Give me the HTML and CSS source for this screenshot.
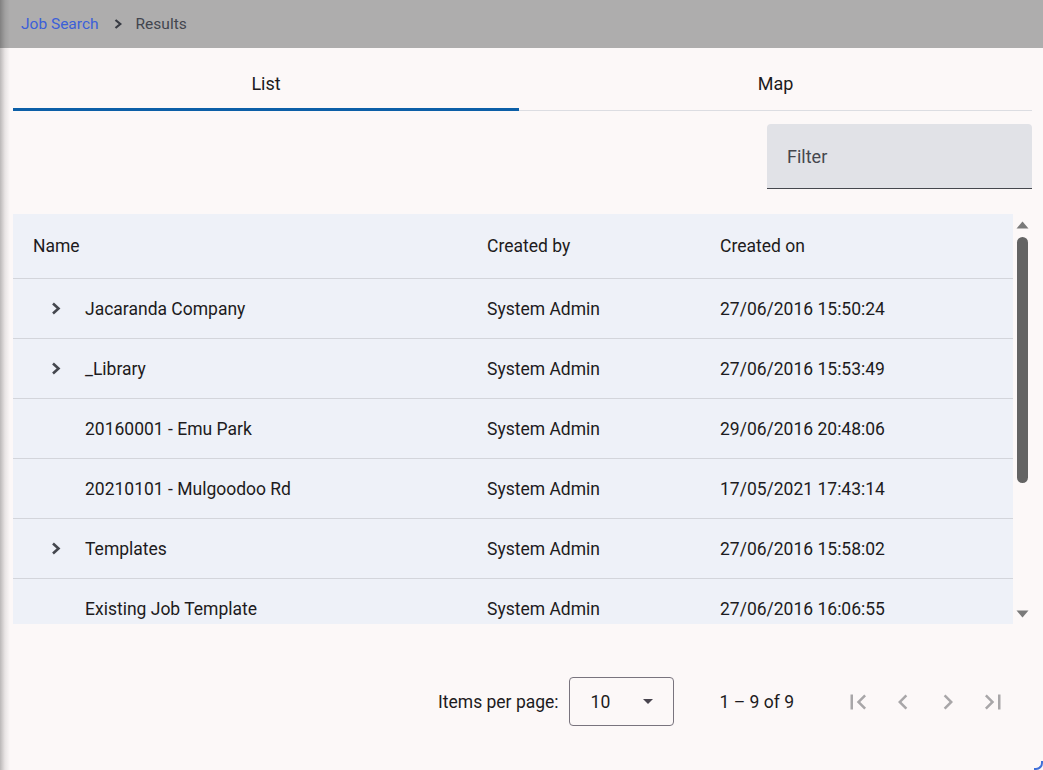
FILE: index.html
```html
<!DOCTYPE html>
<html lang="en">
<head>
<meta charset="utf-8">
<title>Job Search - Results</title>
<link rel="stylesheet" href="styles.css">
</head>
<body>
<div class="app">
  <header class="crumbs">
    <a class="crumb-link" href="#">Job Search</a>
    <svg class="crumb-sep" width="8" height="10" viewBox="0 0 8 10"><polyline points="1.5,1 6.3,5 1.5,9" fill="none" stroke="currentColor" stroke-width="2.2"/></svg>
    <span class="crumb-current">Results</span>
  </header>
  <main class="content">
    <nav class="tabs">
      <div class="tab active">List</div>
      <div class="tab">Map</div>
    </nav>
    <div class="filter-row">
      <div class="filter">Filter</div>
    </div>
    <div class="table-wrap">
      <div class="table">
        <div class="row head">
          <div class="cell">Name</div>
          <div class="cell">Created by</div>
          <div class="cell">Created on</div>
        </div>
        <div class="row">
          <div class="cell name"><span class="toggle"><svg width="10" height="13" viewBox="0 0 10 13"><polyline points="2,1.5 7.5,6.5 2,11.5" fill="none" stroke="currentColor" stroke-width="2.6"/></svg></span>Jacaranda Company</div>
          <div class="cell">System Admin</div>
          <div class="cell">27/06/2016 15:50:24</div>
        </div>
        <div class="row">
          <div class="cell name"><span class="toggle"><svg width="10" height="13" viewBox="0 0 10 13"><polyline points="2,1.5 7.5,6.5 2,11.5" fill="none" stroke="currentColor" stroke-width="2.6"/></svg></span>_Library</div>
          <div class="cell">System Admin</div>
          <div class="cell">27/06/2016 15:53:49</div>
        </div>
        <div class="row">
          <div class="cell name"><span class="toggle"></span>20160001 - Emu Park</div>
          <div class="cell">System Admin</div>
          <div class="cell">29/06/2016 20:48:06</div>
        </div>
        <div class="row">
          <div class="cell name"><span class="toggle"></span>20210101 - Mulgoodoo Rd</div>
          <div class="cell">System Admin</div>
          <div class="cell">17/05/2021 17:43:14</div>
        </div>
        <div class="row">
          <div class="cell name"><span class="toggle"><svg width="10" height="13" viewBox="0 0 10 13"><polyline points="2,1.5 7.5,6.5 2,11.5" fill="none" stroke="currentColor" stroke-width="2.6"/></svg></span>Templates</div>
          <div class="cell">System Admin</div>
          <div class="cell">27/06/2016 15:58:02</div>
        </div>
        <div class="row">
          <div class="cell name"><span class="toggle"></span>Existing Job Template</div>
          <div class="cell">System Admin</div>
          <div class="cell">27/06/2016 16:06:55</div>
        </div>
      </div>
      <div class="scrollbar">
        <svg class="sb-arrow" width="13" height="8" viewBox="0 0 13 8"><polygon points="6.5,0.5 12.5,7.5 0.5,7.5" fill="currentColor"/></svg>
        <div class="thumb"></div>
        <svg class="sb-arrow down" width="13" height="8" viewBox="0 0 13 8"><polygon points="0.5,0.5 12.5,0.5 6.5,7.5" fill="currentColor"/></svg>
      </div>
    </div>
    <div class="pager">
      <span class="pager-label">Items per page:</span>
      <div class="select">
        <span>10</span>
        <span class="caret"></span>
      </div>
      <span class="range">1 – 9 of 9</span>
      <div class="pager-buttons">
        <span class="pbtn"><svg viewBox="0 0 24 24" width="30" height="30"><path d="M18.41 16.59L13.820 12l4.59-4.59L17 6l-6 6 6 6zM6 6h2v12H6z" fill="currentColor"/></svg></span>
        <span class="pbtn"><svg viewBox="0 0 24 24" width="30" height="30"><path d="M15.41 7.41L14 6l-6 6 6 6 1.41-1.41L10.83 12z" fill="currentColor"/></svg></span>
        <span class="pbtn"><svg viewBox="0 0 24 24" width="30" height="30"><path d="M10 6L8.59 7.41 13.17 12l-4.58 4.59L10 18l6-6z" fill="currentColor"/></svg></span>
        <span class="pbtn"><svg viewBox="0 0 24 24" width="30" height="30"><path d="M5.59 7.41L10.18 12l-4.59 4.59L7 18l6-6-6-6zM16 6h2v12h-2z" fill="currentColor"/></svg></span>
      </div>
    </div>
  </main>
</div>
</body>
</html>
```

FILE: styles.css
```css
* { box-sizing: border-box; }

html, body {
  margin: 0;
  padding: 0;
}

body {
  width: 1043px;
  height: 770px;
  overflow: hidden;
  background: #fcf8f8;
  font-family: Roboto, "Liberation Sans", sans-serif;
  color: #1d1b20;
}

.app {
  position: relative;
  height: 770px;
  display: flex;
  flex-direction: column;
}

.app::before {
  content: "";
  position: absolute;
  left: 0;
  top: 0;
  bottom: 0;
  width: 11px;
  background: linear-gradient(to right, rgba(0,0,0,0.26), rgba(0,0,0,0.08) 5px, rgba(0,0,0,0) 10px);
  pointer-events: none;
}

.app::after {
  content: "";
  position: absolute;
  right: 0;
  bottom: 0;
  width: 7px;
  height: 7px;
  border-right: 2px solid #3f6fd8;
  border-bottom: 2px solid #3f6fd8;
  border-bottom-right-radius: 7px;
  pointer-events: none;
}

/* breadcrumb bar */
.crumbs {
  height: 48px;
  flex: none;
  background: #aeadad;
  display: flex;
  align-items: center;
  padding-left: 21px;
  font-size: 15.5px;
}

.crumb-link {
  color: #3b60d9;
  text-decoration: none;
}

.crumb-sep {
  color: #383b43;
  margin: 0 14px 0 15px;
}

.crumb-current {
  color: #42454e;
}

/* content */
.content {
  flex: 1;
  display: flex;
  flex-direction: column;
  padding: 0 11px 0 13px;
}

.tabs {
  display: grid;
  grid-template-columns: 506px 1fr;
  border-bottom: 1px solid #dcdde2;
}

.tab {
  position: relative;
  height: 62px;
  padding-top: 8px;
  display: flex;
  align-items: center;
  justify-content: center;
  font-size: 18px;
  font-weight: 400;
  color: #1d1b20;
}

.tab.active::after {
  content: "";
  position: absolute;
  left: 0;
  right: 0;
  bottom: -1px;
  height: 3px;
  background: #0c5fa7;
}

.filter-row {
  display: flex;
  justify-content: flex-end;
  margin-top: 13px;
}

.filter {
  width: 265px;
  height: 65px;
  background: #e1e2e7;
  border-radius: 4px 4px 0 0;
  border-bottom: 1px solid #45474e;
  display: flex;
  align-items: center;
  padding-left: 20px;
  font-size: 18px;
  color: #45474e;
}

/* table */
.table-wrap {
  margin-top: 25px;
  height: 410px;
  display: flex;
}

.table {
  width: 1000px;
  height: 410px;
  overflow: hidden;
  background: #eef1f8;
  font-size: 17.5px;
}

.row {
  display: grid;
  grid-template-columns: 454px 233px 1fr;
  padding-left: 20px;
  height: 60px;
  align-items: center;
  border-bottom: 1px solid #d3d5db;
}

.row.head {
  height: 65px;
}

.cell {
  white-space: nowrap;
}

.cell.name {
  display: flex;
  align-items: center;
}

.toggle {
  width: 52px;
  flex: none;
  display: flex;
  align-items: center;
  padding-left: 18px;
  color: #44474e;
}

.toggle svg {
  display: block;
}

.scrollbar {
  width: 19px;
  display: flex;
  flex-direction: column;
  align-items: center;
  padding: 7px 0 6px;
  color: #7a7a7a;
}

.sb-arrow {
  display: block;
  flex: none;
}

.sb-arrow.down {
  margin-top: auto;
}

.thumb {
  margin-top: 8px;
  width: 11px;
  height: 246px;
  border-radius: 6px;
  background: #646464;
}

/* paginator */
.pager {
  margin-top: 53px;
  height: 49px;
  display: flex;
  align-items: center;
  justify-content: flex-end;
  margin-right: 19px;
  font-size: 17.5px;
  color: #1d1b20;
}

.pager-label {
  margin-right: 10px;
}

.select {
  width: 105px;
  height: 49px;
  border: 1px solid #79747e;
  border-radius: 4px;
  display: flex;
  align-items: center;
  justify-content: space-between;
  padding: 0 20px 0 21px;
}

.caret {
  width: 0;
  height: 0;
  border-left: 5px solid transparent;
  border-right: 5px solid transparent;
  border-top: 5px solid #49454f;
}

.range {
  margin-left: 46px;
  margin-right: 44px;
}

.pager-buttons {
  display: flex;
  gap: 5px;
}

.pbtn {
  width: 40px;
  height: 40px;
  display: flex;
  align-items: center;
  justify-content: center;
  color: #a8a6a8;
}

.pbtn svg {
  display: block;
}
```
